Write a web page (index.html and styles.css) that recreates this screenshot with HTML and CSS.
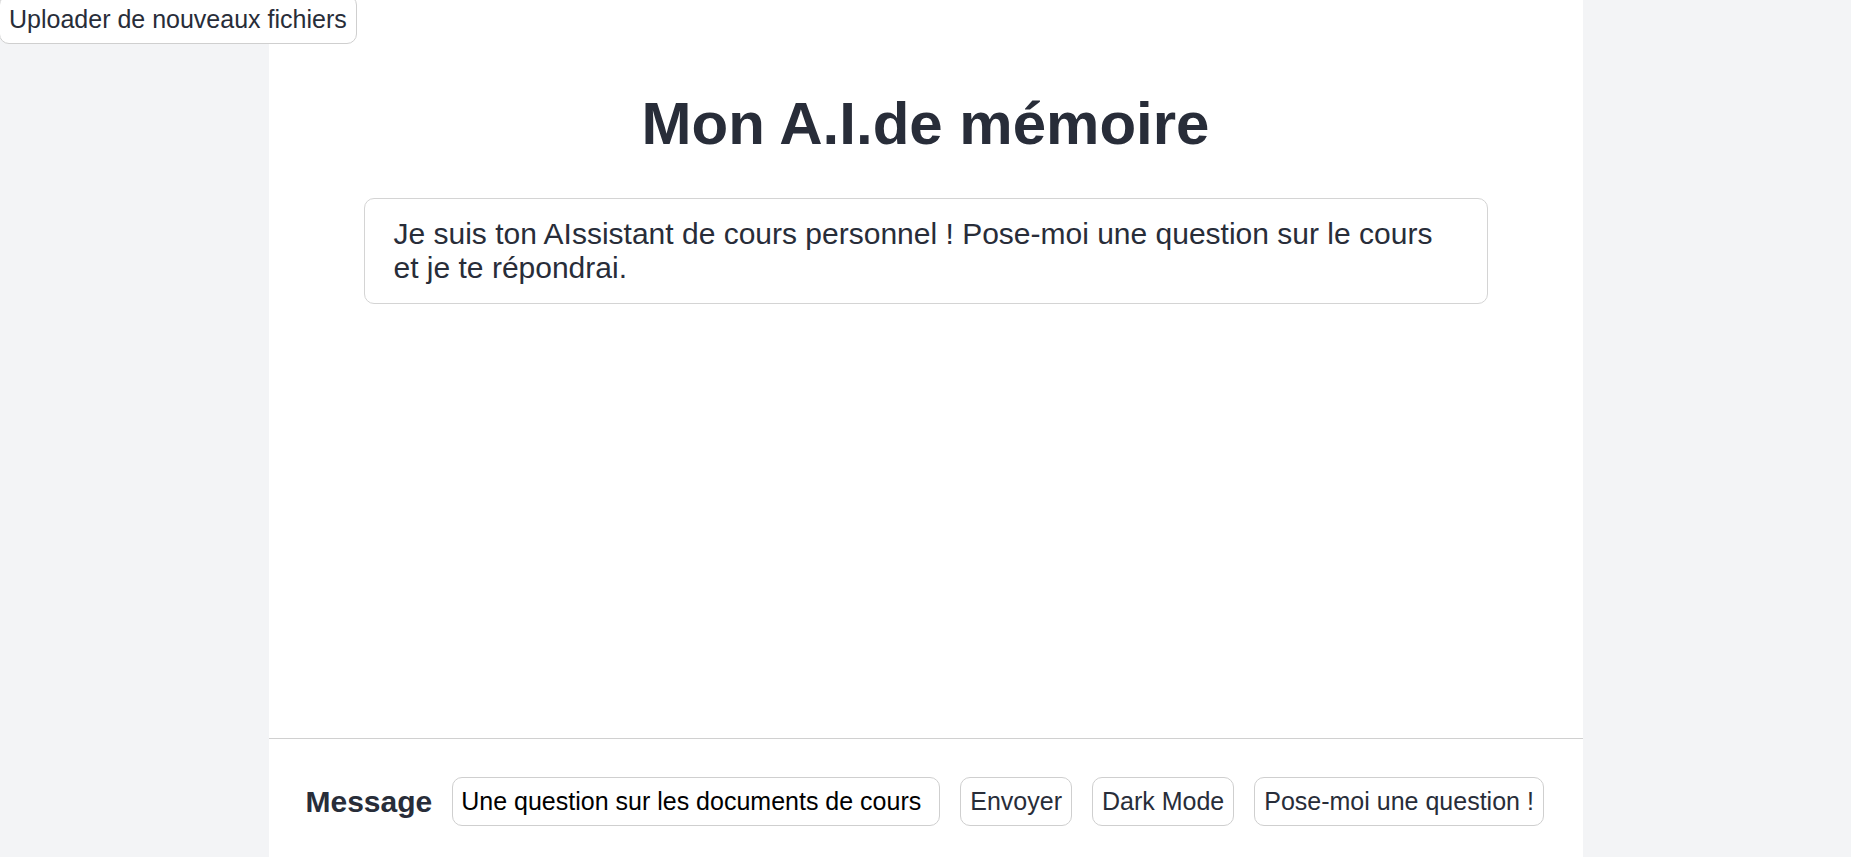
FILE: index.html
```html
<!DOCTYPE html>
<html lang="fr">
<head>
<meta charset="utf-8">
<title>Mon A.I.de mémoire</title>
<link rel="stylesheet" href="styles.css">
</head>
<body>
<button class="btn upload-btn">Uploader de nouveaux fichiers</button>
<main class="app">
  <section class="chat">
    <h1 class="title">Mon A.I.de mémoire</h1>
    <div class="bubble">Je suis ton AIssistant de cours personnel ! Pose-moi une question sur le cours et je te répondrai.</div>
  </section>
  <footer class="composer">
    <label class="composer-label" for="msg">Message</label>
    <input id="msg" class="composer-input" type="text" value="Une question sur les documents de cours">
    <button class="btn">Envoyer</button>
    <button class="btn">Dark Mode</button>
    <button class="btn">Pose-moi une question !</button>
  </footer>
</main>
</body>
</html>
```

FILE: styles.css
```css
* { box-sizing: border-box; }
html, body { height: 100%; }
body {
  margin: 0;
  background: #f3f4f6;
  font-family: "Liberation Sans", Arial, sans-serif;
  color: #282d39;
  overflow: hidden;
}
.app {
  width: 1314px;
  height: 857px;
  margin: 0 auto;
  background: #ffffff;
  display: flex;
  flex-direction: column;
}
.chat {
  flex: 1;
  display: flex;
  flex-direction: column;
  align-items: center;
  padding-top: 89px;
}
.title {
  margin: 0 0 40px;
  font-size: 60px;
  font-weight: 700;
  line-height: normal;
  color: #282d39;
  text-align: center;
}
.bubble {
  width: 1124px;
  border: 1px solid #d4d4d4;
  border-radius: 10px;
  padding: 18px 29px;
  font-size: 30px;
  line-height: normal;
  color: #282d39;
}
.composer {
  border-top: 1px solid #d0d0d0;
  padding: 38px 37px 31px;
  display: flex;
  align-items: center;
  gap: 20px;
}
.composer-label {
  font-size: 30px;
  font-weight: 700;
  color: #282d39;
}
.composer-input {
  width: 488px;
  height: 49px;
  border: 1px solid #cfcfcf;
  border-radius: 10px;
  padding: 0 8px;
  font-family: "Liberation Sans", Arial, sans-serif;
  font-size: 25px;
  color: #000;
  background: #fff;
  outline: none;
}
.btn {
  font-family: "Liberation Sans", Arial, sans-serif;
  font-size: 25px;
  line-height: normal;
  color: #282d39;
  background: #ffffff;
  border: 1px solid #cfcfcf;
  border-radius: 10px;
  padding: 9px 9px;
  height: 49px;
  white-space: nowrap;
  cursor: pointer;
}
.upload-btn {
  position: absolute;
  top: -5px;
  left: -1px;
  z-index: 2;
}
```
